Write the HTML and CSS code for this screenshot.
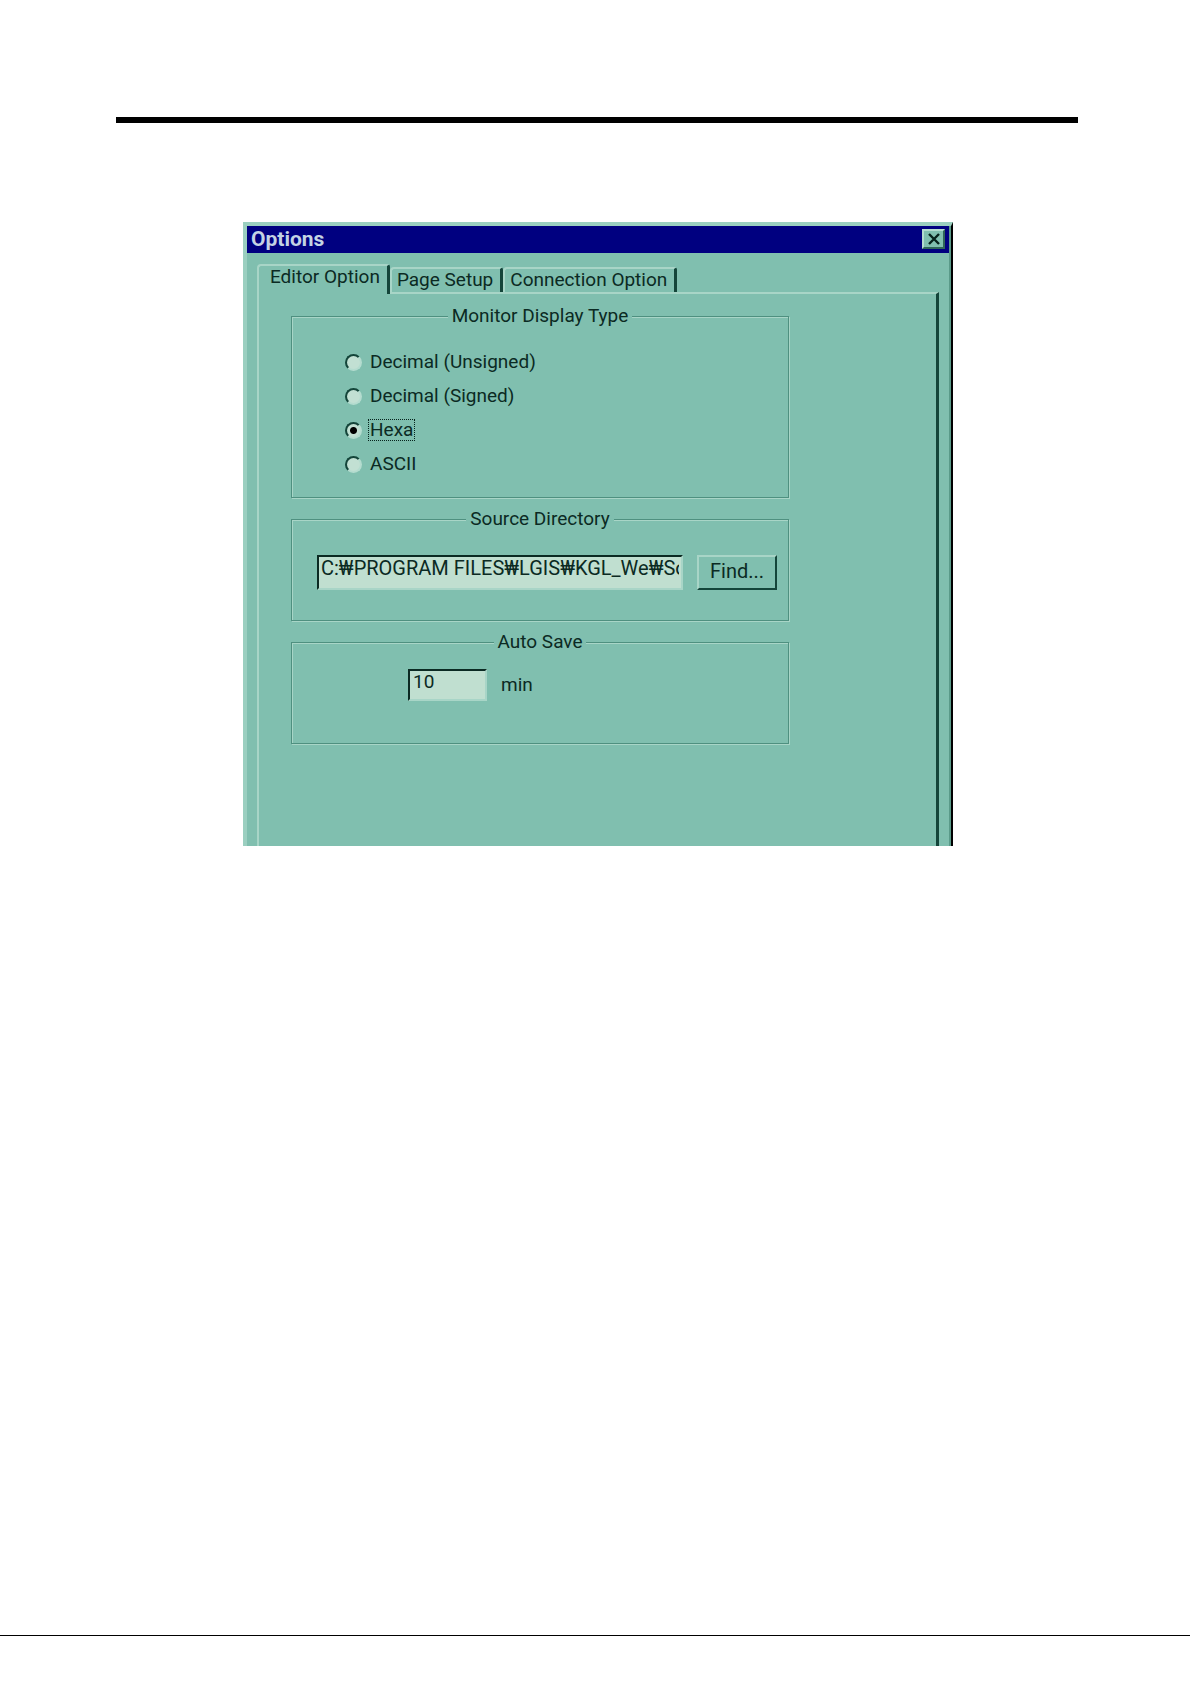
FILE: index.html
```html
<!DOCTYPE html>
<html lang="en">
<head>
    <meta charset="UTF-8">
    <meta name="viewport" content="width=device-width, initial-scale=1.0">
    <title>Options</title>
    <link rel="stylesheet" href="styles.css">
</head>
<body>
    <main class="sheet">
        <hr class="header-rule">

        <section class="dialog" aria-labelledby="dialog-title">
            <header class="title-bar">
                <h1 class="title" id="dialog-title">Options</h1>
                <button class="close-button" type="button" aria-label="Close">
                    <svg width="14" height="12" viewBox="0 0 14 12">
                        <path d="M2 1 L12 11 M12 1 L2 11" stroke="#06231c" stroke-width="2.4" fill="none"/>
                    </svg>
                </button>
            </header>

            <div class="tabs" role="tablist">
                <button class="tab tab-active" type="button" role="tab" aria-selected="true">Editor Option</button>
                <button class="tab" type="button" role="tab" aria-selected="false">Page Setup</button>
                <button class="tab" type="button" role="tab" aria-selected="false">Connection Option</button>
            </div>

            <form class="panel" role="tabpanel">
                <fieldset class="group">
                    <legend>Monitor Display Type</legend>
                    <div class="radio-list">
                        <label class="radio-row"><input type="radio" name="display"><span>Decimal (Unsigned)</span></label>
                        <label class="radio-row"><input type="radio" name="display"><span>Decimal (Signed)</span></label>
                        <label class="radio-row"><input type="radio" name="display" checked><span class="focused">Hexa</span></label>
                        <label class="radio-row"><input type="radio" name="display"><span>ASCII</span></label>
                    </div>
                </fieldset>

                <fieldset class="group">
                    <legend>Source Directory</legend>
                    <div class="source-row">
                        <input class="text-box path-box" type="text" aria-label="Source Directory" value="C:₩PROGRAM FILES₩LGIS₩KGL_We₩Source">
                        <button class="find-button" type="button">Find...</button>
                    </div>
                </fieldset>

                <fieldset class="group">
                    <legend>Auto Save</legend>
                    <div class="save-row">
                        <input class="text-box min-box" type="text" id="minutes" value="10">
                        <label for="minutes">min</label>
                    </div>
                </fieldset>
            </form>
        </section>
    </main>
    <footer class="page-footer"></footer>
</body>
</html>
```

FILE: styles.css
```css
* {
    box-sizing: border-box;
}

body {
    display: flex;
    flex-direction: column;
    min-height: 100vh;
    margin: 0;
    background: #fff;
    color: #0b2a23;
    font-family: Roboto, "Noto Sans CJK KR", sans-serif;
    font-size: 19px;
    line-height: 24px;
}

button,
input {
    color: inherit;
    font: inherit;
}

.sheet {
    flex: 1;
    padding: 117px 112px 0 116px;
}

.header-rule {
    height: 6px;
    margin: 0;
    border: 0;
    background: #000;
}

/* Dialog window */
.dialog {
    max-width: 710px;
    margin: 99px auto 0 127px;
    padding: 0 2px 0 0;
    background: #80bfaf;
    border-top: 4px solid #9bcfc0;
    border-left: 4px solid #9bcfc0;
    border-right: 2px solid #000;
    box-shadow: inset -2px 0 0 #5a9a89;
}

.title-bar {
    display: flex;
    align-items: center;
    justify-content: space-between;
    height: 27px;
    padding: 0 4px 2px;
    background: #000080;
}

.title {
    margin: 0;
    color: #c3d3e4;
    font-size: 21px;
    font-weight: bold;
}

.close-button {
    display: flex;
    align-items: center;
    justify-content: center;
    width: 23px;
    height: 20px;
    padding: 0;
    background: #80bfaf;
    border: 2px solid;
    border-color: #b4dccf #2f6658 #2f6658 #b4dccf;
}

/* Tabs */
.tabs {
    display: flex;
    align-items: flex-end;
    height: 39px;
    padding-left: 10px;
}

.tab {
    height: 25px;
    padding: 0 7px 2px 5px;
    background: #80bfaf;
    border: 0;
    border-top: 2px solid #a8d5c7;
    border-left: 2px solid #a8d5c7;
    border-right: 3px solid #14453a;
    border-radius: 4px 3px 0 0;
    white-space: nowrap;
    line-height: 20px;
}

.tab-active {
    position: relative;
    height: 30px;
    margin-bottom: -2px;
    padding: 0 7px 6px 11px;
}

.panel {
    margin: 0 10px;
    padding: 10px 30px 102px 32px;
    border-top: 2px solid #a8d5c7;
    border-left: 2px solid #a8d5c7;
    border-right: 3px solid #14453a;
}

/* Etched group boxes */
.group {
    max-width: 498px;
    min-width: 0;
    margin: 0 0 9px;
    padding: 0;
    border: 1px solid #4f9080;
    box-shadow: 1px 1px 0 #a8d5c7, inset 1px 1px 0 #a8d5c7;
}

.group:last-child {
    margin-bottom: 0;
}

.group legend {
    margin: 0 auto;
    padding: 0 4px;
    background: #80bfaf;
}

.radio-list {
    display: flex;
    flex-direction: column;
    gap: 10px;
    padding: 22px 20px 21px 53px;
}

.radio-row {
    display: flex;
    align-items: center;
    gap: 6px;
    height: 24px;
}

.radio-row span {
    padding: 0 1px;
    border: 1px solid transparent;
    line-height: 20px;
}

.radio-row .focused {
    border: 1px dotted #06231c;
}

.radio-row input {
    appearance: none;
    width: 17px;
    height: 17px;
    margin: 0;
    background: #c2e0d3;
    border: 2px solid;
    border-color: #14453a #b4dccf #b4dccf #14453a;
    border-radius: 50%;
}

.radio-row input:checked {
    background: radial-gradient(circle, #000 3px, #c2e0d3 4px);
}

/* Fields and buttons */
.text-box {
    min-width: 0;
    background: #c0dfd0;
    border: 2px solid;
    border-color: #0b2a23 #a8d5c7 #a8d5c7 #0b2a23;
    border-radius: 0;
}

.source-row,
.save-row {
    display: flex;
    align-items: center;
    gap: 14px;
}

.source-row {
    padding: 24px 11px 30px 25px;
}

.save-row {
    padding: 15px 20px 42px 116px;
}

.path-box {
    flex: 1;
    height: 35px;
    padding: 0 2px 9px;
    font-size: 20px;
}

.min-box {
    width: 79px;
    height: 32px;
    padding: 0 3px 7px;
}

.find-button {
    width: 80px;
    height: 35px;
    padding: 0 0 3px;
    background: #80bfaf;
    border: 2px solid;
    border-color: #a8d5c7 #14453a #14453a #a8d5c7;
    font-size: 20px;
}

.page-footer {
    height: 49px;
    border-top: 1px solid #000;
}
```
